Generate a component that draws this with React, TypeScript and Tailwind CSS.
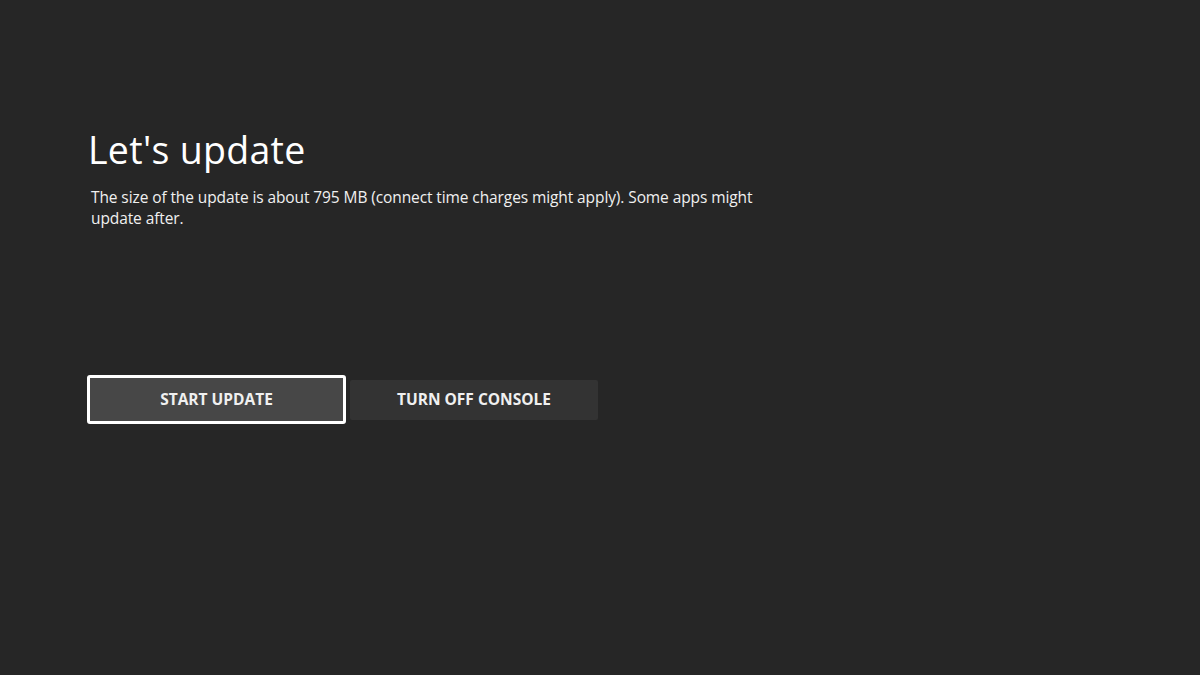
export default function App() {
  return (
    <div className="w-[1200px] h-[675px] bg-[#262626] text-white flex flex-col pl-[87px] pt-[124px]" style={{ fontFamily: '"Open Sans", "Noto Sans", sans-serif' }}>
      <h1 className="text-[37.5px] leading-[52px] font-normal tracking-[0.3px] pl-[1px]">Let's update</h1>
      <p className="mt-[11px] w-[690px] text-[15.5px] leading-[21px] text-[#f0f0f0] pl-[4px] tracking-[-0.1px]">
        The size of the update is about 795 MB (connect time charges might apply). Some apps might update after.
      </p>
      <div className="mt-[146px] flex items-center gap-[4px]">
        <button className="w-[259px] h-[49px] rounded-[3px] border-[3px] border-white bg-[#474747] text-[15.5px] font-bold text-[#f0f0f0]">START UPDATE</button>
        <button className="w-[248px] h-[40px] rounded-[2px] bg-[#333333] text-[15.5px] font-bold text-[#f0f0f0]">TURN OFF CONSOLE</button>
      </div>
    </div>
  );
}
